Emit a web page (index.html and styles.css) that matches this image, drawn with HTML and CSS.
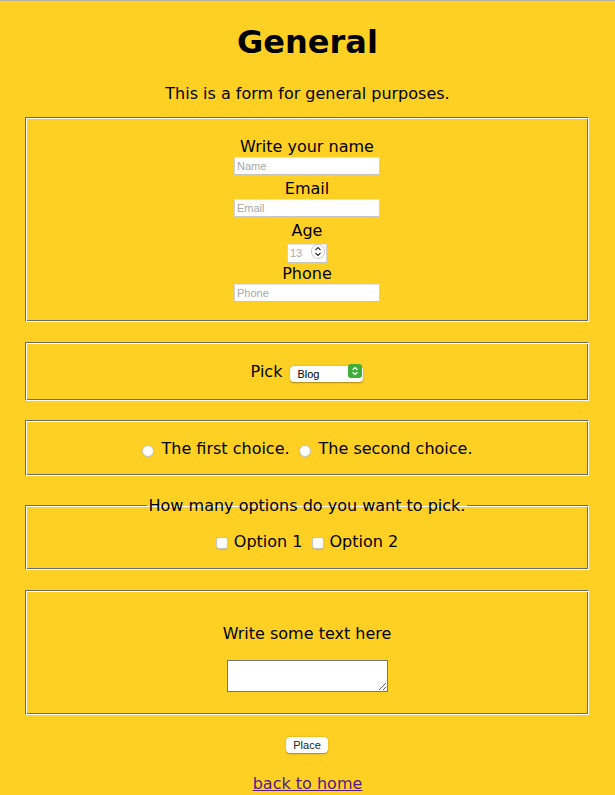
FILE: index.html
```html
<!DOCTYPE html>
<html lang="en">
<head>
<meta charset="utf-8">
<title>General</title>
<link rel="stylesheet" href="styles.css">
</head>
<body>
<h1 class="title">General</h1>
<p class="intro">This is a form for general purposes.</p>
<form class="form">
  <fieldset class="box box-fields">
    <label class="field-label" for="name">Write your name</label>
    <input class="text-input" id="name" type="text" placeholder="Name">
    <label class="field-label" for="email">Email</label>
    <input class="text-input" id="email" type="email" placeholder="Email">
    <label class="field-label" for="age">Age</label>
    <span class="number-wrap">
      <input class="number-input" id="age" type="number" placeholder="13">
      <svg class="spinner" width="14" height="15" viewBox="0 0 14 15" aria-hidden="true">
        <rect x="0.5" y="0.5" width="13" height="14" rx="6.5" fill="#fff" stroke="#c9c9c9"/>
        <path d="M4.5 6 L7 3.6 L9.5 6" fill="none" stroke="#333" stroke-width="1.2"/>
        <path d="M4.5 9 L7 11.4 L9.5 9" fill="none" stroke="#333" stroke-width="1.2"/>
      </svg>
    </span>
    <label class="field-label" for="phone">Phone</label>
    <input class="text-input" id="phone" type="tel" placeholder="Phone">
  </fieldset>

  <fieldset class="box box-row box-pick">
    <label class="row-label" for="pick">Pick</label>
    <span class="select-wrap">
      <select class="select" id="pick">
        <option>Blog</option>
      </select>
      <svg class="select-arrow" width="14" height="14" viewBox="0 0 14 14" aria-hidden="true">
        <rect x="0" y="0" width="14" height="14" rx="3" fill="#3fae39"/>
        <path d="M4.6 5.8 L7 3.6 L9.4 5.8" fill="none" stroke="#fff" stroke-width="1.3"/>
        <path d="M4.6 8.2 L7 10.4 L9.4 8.2" fill="none" stroke="#fff" stroke-width="1.3"/>
      </svg>
    </span>
  </fieldset>

  <fieldset class="box box-row box-radios">
    <input class="radio" type="radio" name="choice" id="c1">
    <label class="choice-label" for="c1">The first choice.</label>
    <input class="radio" type="radio" name="choice" id="c2">
    <label class="choice-label" for="c2">The second choice.</label>
  </fieldset>

  <fieldset class="box box-legend">
    <legend class="legend"><span class="legend-text">How many options do you want to pick.</span></legend>
    <div class="check-row">
      <input class="check" type="checkbox" id="o1">
      <label class="choice-label" for="o1">Option 1</label>
      <input class="check" type="checkbox" id="o2">
      <label class="choice-label" for="o2">Option 2</label>
    </div>
  </fieldset>

  <fieldset class="box box-text">
    <label class="text-label" for="txt">Write some text here</label>
    <textarea class="textarea" id="txt"></textarea>
  </fieldset>

  <div class="actions">
    <button class="button" type="button">Place</button>
  </div>
</form>
<div class="home">
  <a class="home-link" href="#">back to home</a>
</div>
</body>
</html>
```

FILE: styles.css
```css
html {
  border-top: 1px solid #b4b0a0;
  background: #fed024;
}

body {
  margin: 0;
  background: #fed024;
  font-family: "DejaVu Sans", Verdana, sans-serif;
  font-size: 16px;
  color: #000;
  text-align: center;
}

.title {
  margin: 21px 0 0;
  font-size: 32px;
  line-height: 40px;
  font-weight: bold;
}

.intro {
  margin: 22px 0 0;
  line-height: 20px;
}

.form {
  margin: 13px 26px 0 25px;
}

.box {
  margin: 0 0 19px;
  min-width: 0;
  border: 1px solid;
  border-color: #6b6b6b #fff #fff #6b6b6b;
  box-shadow: inset 1px 1px 0 #fff, inset -1px -1px 0 #6b6b6b;
  padding: 0;
}

.box-fields {
  margin-bottom: 20px;
  padding: 19px 0 15px;
  display: flex;
  flex-direction: column;
  align-items: center;
}

.field-label {
  display: block;
  line-height: 20px;
}

.text-input {
  box-sizing: border-box;
  width: 146px;
  height: 18px;
  margin: 0 0 4px;
  padding: 0 2px;
  border: 1px solid;
  border-color: #e4e4e4 #d0d0d0 #c4c4c4 #d0d0d0;
  background: #fff;
  font-family: "Liberation Sans", Arial, sans-serif;
  font-size: 11px;
  color: #000;
  outline: none;
}

.text-input::placeholder,
.number-input::placeholder {
  color: #a8a8a8;
}

.number-wrap {
  position: relative;
  display: block;
  width: 40px;
  height: 19px;
  margin: 1px 0 3px;
}

.number-input {
  box-sizing: border-box;
  width: 40px;
  height: 19px;
  margin: 0;
  padding: 0 2px;
  border: 1px solid;
  border-color: #e4e4e4 #d0d0d0 #c4c4c4 #d0d0d0;
  background: #fff;
  font-family: "Liberation Sans", Arial, sans-serif;
  font-size: 11px;
  -moz-appearance: textfield;
  outline: none;
}

.number-input::-webkit-inner-spin-button,
.number-input::-webkit-outer-spin-button {
  -webkit-appearance: none;
  margin: 0;
}

.spinner {
  position: absolute;
  right: 2px;
  top: 2px;
}

.box-row {
  display: flex;
  justify-content: center;
  align-items: center;
}

.box-pick {
  padding: 18px 0 19px;
}

.box-radios {
  padding: 18px 0 16px;
}

.row-label {
  line-height: 20px;
  margin-right: 8px;
  position: relative;
  top: 1px;
}

.select-wrap {
  position: relative;
  display: inline-block;
  width: 73px;
  height: 16px;
  align-self: flex-start;
  margin-top: 2px;
}

.select {
  -webkit-appearance: none;
  appearance: none;
  box-sizing: border-box;
  width: 73px;
  height: 16px;
  margin: 0;
  padding: 0 0 0 7px;
  border: none;
  border-radius: 4px;
  background: #fff;
  box-shadow: 0 0.5px 1.5px rgba(0,0,0,0.35);
  font-family: "Liberation Sans", Arial, sans-serif;
  font-size: 11px;
  line-height: 16px;
  color: #000;
  outline: none;
}

.select-arrow {
  position: absolute;
  right: 1px;
  top: 1px;
  pointer-events: none;
}

.radio {
  -webkit-appearance: none;
  appearance: none;
  box-sizing: border-box;
  width: 12px;
  height: 12px;
  margin: 4px 8px 0 0;
  border: 1px solid #c6c6c6;
  border-radius: 50%;
  background: #fff;
  box-shadow: 0 0.5px 1px rgba(0,0,0,0.1);
}

.choice-label {
  line-height: 20px;
  margin-right: 9px;
}

.choice-label:last-child {
  margin-right: 0;
}

.box-legend {
  margin-bottom: 20px;
  padding: 0 0 17px;
}

.legend {
  margin: 0 auto;
  padding: 0 2px;
  line-height: 20px;
}

.legend-text {
  position: relative;
  top: 1px;
}

.check-row {
  margin-top: 17px;
  display: flex;
  justify-content: center;
  align-items: center;
}

.check {
  -webkit-appearance: none;
  appearance: none;
  box-sizing: border-box;
  width: 12px;
  height: 12px;
  margin: 2px 6px 0 0;
  border: 1px solid #c6c6c6;
  border-radius: 3px;
  background: #fff;
  box-shadow: 0 0.5px 1px rgba(0,0,0,0.1);
}

.box-text {
  padding: 33px 0 22px;
  display: flex;
  flex-direction: column;
  align-items: center;
}

.text-label {
  display: block;
  line-height: 20px;
  margin-bottom: 16px;
}

.textarea {
  box-sizing: border-box;
  width: 161px;
  height: 32px;
  margin: 0;
  border: 1px solid #767676;
  background: #fff;
  display: block;
}

.actions {
  margin-top: 22px;
  display: flex;
  justify-content: center;
}

.button {
  box-sizing: border-box;
  height: 16px;
  padding: 0 7px;
  border: none;
  border-radius: 4px;
  background: #fff;
  box-shadow: 0 0.5px 1.5px rgba(0,0,0,0.35);
  font-family: "Liberation Sans", Arial, sans-serif;
  font-size: 11px;
  line-height: 16px;
  color: #222;
}

.home {
  margin-top: 21px;
  line-height: 20px;
}

.home-link {
  color: #551a8b;
}
```
